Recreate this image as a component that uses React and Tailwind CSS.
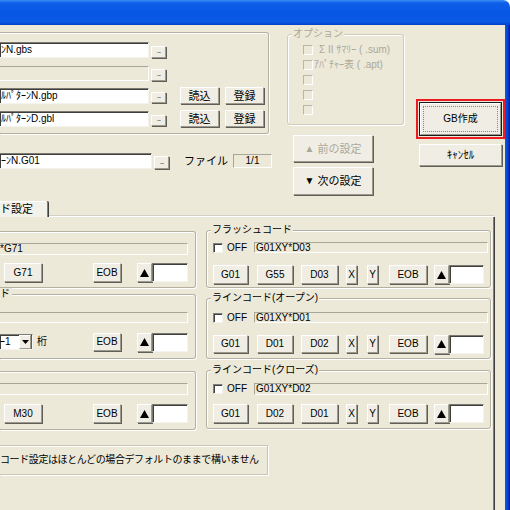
import React from 'react';

const Btn = ({ className = '', dis, children }) => (
  <div
    className={`flex items-center justify-center whitespace-nowrap bg-[#F0EEE4] border border-t-white border-l-white border-r-[#9D9A8C] border-b-[#9D9A8C] shadow-[1px_1px_0_#5F5E58] ${dis ? 'text-[#ACA899]' : 'text-black'} ${className}`}
  >
    {children}
  </div>
);

const Dots = ({ className = '' }) => (
  <Btn className={`w-[15px] ${className}`}>
    <span className="text-[8px] leading-none tracking-[-1px] -mt-[2px] text-[#333]">...</span>
  </Btn>
);

const Tri = () => (
  <Btn className="w-[15px] h-[19px]">
    <svg width="9" height="8" viewBox="0 0 9 8">
      <polygon points="0,8 4.5,0 9,8" fill="#000" />
    </svg>
  </Btn>
);

// white edit box
const Edit = ({ className = '', children }) => (
  <div
    className={`flex items-center overflow-hidden whitespace-nowrap bg-white border border-t-[#7A7A72] border-l-[#7A7A72] border-r-[#F4F3EE] border-b-[#F4F3EE] shadow-[inset_1px_1px_0_#3E3E3A] ${className}`}
  >
    {children}
  </div>
);

// read-only sunken text
const Static = ({ className = '', children }) => (
  <div
    className={`flex items-center overflow-hidden whitespace-nowrap bg-[#ECE9D8] border border-t-[#A8A698] border-l-[#A8A698] border-r-white border-b-white ${className}`}
  >
    {children}
  </div>
);

const Check = ({ dis }) => (
  <div
    className={`w-[10px] h-[10px] shrink-0 border ${dis ? 'bg-[#ECE9D8] border-t-[#B9B6A8] border-l-[#B9B6A8] border-r-white border-b-white' : 'bg-white border-t-[#808080] border-l-[#808080] border-r-[#F4F3EE] border-b-[#F4F3EE] shadow-[inset_1px_1px_0_#404040]'}`}
  />
);

const Legend = ({ className = '', children }) => (
  <div className={`-mt-[7px] h-[12px] leading-[12px] w-fit bg-[#ECE9D8] whitespace-nowrap ${className}`}>{children}</div>
);

const CodeGroup = ({ label, field, buttons, className = '' }) => (
  <div className={`flex flex-col border border-[#B4B1A3] rounded-[3px] shadow-[inset_1px_1px_0_#fff,1px_1px_0_#fff] ${className}`}>
    <Legend className="ml-[4px] px-[1px]">{label}</Legend>
    {field}
    {buttons}
  </div>
);

const RightRow = ({ a, b, c, className = '' }) => (
  <div className={`flex items-center ${className}`}>
    <Btn className="ml-[6px] w-[35px] h-full">{a}</Btn>
    <Btn className="ml-[9px] w-[36px] h-full">{b}</Btn>
    <Btn className="ml-[8px] w-[37px] h-full">{c}</Btn>
    <Btn className="ml-[8px] w-[11px] h-full">X</Btn>
    <Btn className="ml-[10px] w-[11px] h-full">Y</Btn>
    <Btn className="ml-[11px] w-[38px] h-full">EOB</Btn>
    <div className="ml-[7px] flex h-[19px]">
      <Tri />
      <Edit className="w-[35px] h-[19px]" />
    </div>
  </div>
);

const OffRow = ({ code, className = '' }) => (
  <div className={`flex items-center ${className}`}>
    <div className="ml-[6px]">
      <Check />
    </div>
    <span className="ml-[4px] w-[27px]">OFF</span>
    <Static className="w-[234px] h-full pl-[1px]">{code}</Static>
  </div>
);

const LeftRow = ({ first, className = '' }) => (
  <div className={`flex items-center ${className}`}>
    <div className="w-[93px] h-full flex items-center">{first}</div>
    <Btn className="w-[28px] h-full">EOB</Btn>
    <div className="ml-[16px] flex h-[19px]">
      <Tri />
      <Edit className="w-[36px] h-[19px]" />
    </div>
  </div>
);

const leftBox = 'flex flex-col border border-l-0 border-[#B4B1A3] rounded-r-[3px] shadow-[inset_0_1px_0_#fff,1px_1px_0_#fff] w-[196px]';

export default function App() {
  return (
    <div className="w-[510px] h-[510px] overflow-hidden flex flex-col bg-white text-[10px] leading-[12px] text-black [font-family:'Liberation_Sans','Noto_Sans_CJK_JP',sans-serif]">
      {/* title bar */}
      <div className="h-[25px] shrink-0 rounded-tr-[7px] bg-[linear-gradient(180deg,#3C8CF6_0%,#0F5FEA_12%,#0855E4_50%,#0A58E6_88%,#0340C8_100%)]" />

      <div className="flex flex-1 bg-[#ECE9D8]">
        <div className="w-[505px] flex flex-col">
          {/* top section */}
          <div className="h-[175px] flex items-start">
            {/* files */}
            <div className="w-[272px] flex flex-col">
              <div className="mt-[7px] h-[102px] w-[269px] flex flex-col border border-l-0 border-[#B4B1A3] rounded-r-[3px] shadow-[inset_0_1px_0_#fff,1px_1px_0_#fff]">
                <div className="mt-[9px] h-[16px] flex items-end">
                  <Edit className="w-[149px] h-[16px] border-l-0 pl-[1px]">ﾝN.gbs</Edit>
                  <Dots className="ml-[2px] h-[12px]" />
                </div>
                <div className="mt-[8px] h-[15px] flex items-end">
                  <Static className="w-[149px] h-[15px] border-l-0" />
                  <Dots className="ml-[2px] h-[12px]" />
                </div>
                <div className="mt-[6px] h-[17px] flex items-center">
                  <div className="h-[16px] flex items-end">
                    <Edit className="w-[149px] h-[16px] border-l-0 pl-[1px]">ﾙﾊﾟﾀｰﾝN.gbp</Edit>
                    <Dots className="ml-[2px] h-[11px] mb-[1px]" />
                  </div>
                  <Btn className="ml-[14px] w-[39px] h-[17px] text-[11px]">読込</Btn>
                  <Btn className="ml-[6px] w-[39px] h-[17px] text-[11px]">登録</Btn>
                </div>
                <div className="mt-[6px] h-[17px] flex items-center">
                  <div className="h-[16px] flex items-end">
                    <Edit className="w-[149px] h-[16px] border-l-0 pl-[1px]">ﾙﾊﾟﾀｰﾝD.gbl</Edit>
                    <Dots className="ml-[2px] h-[11px] mb-[1px]" />
                  </div>
                  <Btn className="ml-[14px] w-[39px] h-[17px] text-[11px]">読込</Btn>
                  <Btn className="ml-[6px] w-[39px] h-[17px] text-[11px]">登録</Btn>
                </div>
              </div>
              <div className="mt-[19px] h-[16px] flex items-center">
                <div className="h-[16px] flex items-end">
                  <Edit className="w-[152px] h-[16px] border-l-0 pl-[1px]">ｰﾝN.G01</Edit>
                  <Dots className="ml-[2px] h-[13px]" />
                </div>
                <span className="ml-[15px] w-[49px] text-[11px]">ファイル</span>
                <Static className="w-[39px] h-[14px] justify-center">1/1</Static>
              </div>
            </div>

            {/* options */}
            <div className="ml-[15px] w-[117px] flex flex-col">
              <div className="mt-[9px] h-[91px] flex flex-col border border-[#CFCCBE] rounded-[3px] shadow-[inset_1px_1px_0_#fff,1px_1px_0_#fff] text-[#ACA899]">
                <Legend className="ml-[4px] px-[1px]">オプション</Legend>
                <div className="mt-[4px] ml-[15px] flex flex-col gap-[4px]">
                  <div className="h-[11px] flex items-center">
                    <Check dis />
                    <span className="ml-[6px] whitespace-nowrap">Σ II ｻﾏﾘｰ ( .sum)</span>
                  </div>
                  <div className="h-[11px] flex items-center">
                    <Check dis />
                    <span className="ml-[1px] whitespace-nowrap">ｱﾊﾟﾁｬｰ表 ( .apt)</span>
                  </div>
                  <div className="h-[11px] flex items-center">
                    <Check dis />
                  </div>
                  <div className="h-[11px] flex items-center">
                    <Check dis />
                  </div>
                  <div className="h-[11px] flex items-center">
                    <Check dis />
                  </div>
                </div>
              </div>
              <Btn dis className="mt-[10px] ml-[6px] w-[80px] h-[27px] text-[11px] gap-[3px]">
                <span className="text-[10px]">▲</span>前の設定
              </Btn>
              <Btn className="mt-[5px] ml-[6px] w-[80px] h-[28px] text-[11px] gap-[3px]">
                <span className="text-[10px]">▼</span>次の設定
              </Btn>
            </div>

            {/* action buttons */}
            <div className="ml-[12px] w-[89px] flex flex-col">
              <div className="mt-[74px] h-[40px] w-[89px] border-2 border-[#EC1C24] p-[1px]">
                <div className="h-full border border-[#1A1A1A] bg-[#F0EEE4]">
                  <div className="h-full border border-t-white border-l-white border-r-[#9D9A8C] border-b-[#9D9A8C] p-[2px]">
                    <div className="h-full flex items-center justify-center border border-dotted border-[#8A887E]">GB作成</div>
                  </div>
                </div>
              </div>
              <Btn className="mt-[5px] ml-[3px] w-[83px] h-[22px] text-[11px]">ｷｬﾝｾﾙ</Btn>
            </div>
          </div>

          {/* tab strip */}
          <div className="h-[17px] w-[494px] flex items-end shrink-0">
            <div className="h-[16px] w-[48px] flex items-center bg-[#F2F1EA] border-t border-t-white border-r border-r-[#808080] shadow-[1px_0_0_#404040] rounded-tr-[2px]">
              <span className="-mt-[1px] whitespace-nowrap text-[11px]">ド設定</span>
            </div>
            <div className="flex-1 h-[2px] ml-[1px] border-t border-t-[#D4D0C8] border-b border-b-white" />
          </div>

          {/* tab panel */}
          <div className="flex-1 w-[494px] border-r border-r-[#808080] shadow-[1px_0_0_#404040] flex flex-col">
            <div className="flex items-start">
              <div className="w-[196px] flex flex-col">
                <div className={`${leftBox} mt-[14px] h-[57px]`}>
                  <Static className="mt-[11px] w-[188px] h-[12px] border-l-0">*G71</Static>
                  <LeftRow className="mt-[8px] h-[19px]" first={<Btn className="ml-[4px] w-[38px] h-full">G71</Btn>} />
                </div>
                <div className={`${leftBox} mt-[6px] h-[65px]`}>
                  <Legend className="pr-[2px]">ド</Legend>
                  <Static className="mt-[12px] w-[188px] h-[11px] border-l-0" />
                  <LeftRow
                    className="mt-[10px] h-[18px]"
                    first={
                      <>
                        <Edit className="w-[33px] h-[16px] border-l-0 justify-between">
                          <span>ｰ1</span>
                          <Btn className="w-[12px] h-[14px] mr-[1px]">
                            <svg width="7" height="4" viewBox="0 0 7 4">
                              <polygon points="0,0 7,0 3.5,4" fill="#000" />
                            </svg>
                          </Btn>
                        </Edit>
                        <span className="ml-[4px]">桁</span>
                      </>
                    }
                  />
                </div>
                <div className={`${leftBox} mt-[12px] h-[59px]`}>
                  <Static className="mt-[11px] w-[188px] h-[12px] border-l-0" />
                  <LeftRow className="mt-[9px] h-[19px]" first={<Btn className="ml-[4px] w-[38px] h-full">M30</Btn>} />
                </div>
              </div>

              <div className="ml-[10px] w-[285px] flex flex-col">
                <CodeGroup
                  className="mt-[13px] h-[58px]"
                  label="フラッシュコード"
                  field={<OffRow className="mt-[6px] h-[11px]" code="G01XY*D03" />}
                  buttons={<RightRow className="mt-[12px] h-[19px]" a="G01" b="G55" c="D03" />}
                />
                <CodeGroup
                  className="mt-[10px] h-[61px]"
                  label="ラインコード(オープン)"
                  field={<OffRow className="mt-[8px] h-[11px]" code="G01XY*D01" />}
                  buttons={<RightRow className="mt-[12px] h-[18px]" a="G01" b="D01" c="D02" />}
                />
                <CodeGroup
                  className="mt-[11px] h-[59px]"
                  label="ラインコード(クローズ)"
                  field={<OffRow className="mt-[7px] h-[12px]" code="G01XY*D02" />}
                  buttons={<RightRow className="mt-[9px] h-[19px]" a="G01" b="D02" c="D01" />}
                />
              </div>
            </div>

            <div className="mt-[15px] h-[30px] w-[268px] flex items-center border border-l-0 border-[#C9C6B8] shadow-[inset_0_1px_0_#fff,1px_1px_0_#fff] whitespace-nowrap tracking-[-0.4px]">
              コード設定はほとんどの場合デフォルトのままで構いません
            </div>
          </div>
        </div>

        {/* window frame */}
        <div className="w-[5px] bg-[linear-gradient(90deg,#0A5AE8,#0842D2,#001E9E)]" />
      </div>
    </div>
  );
}
